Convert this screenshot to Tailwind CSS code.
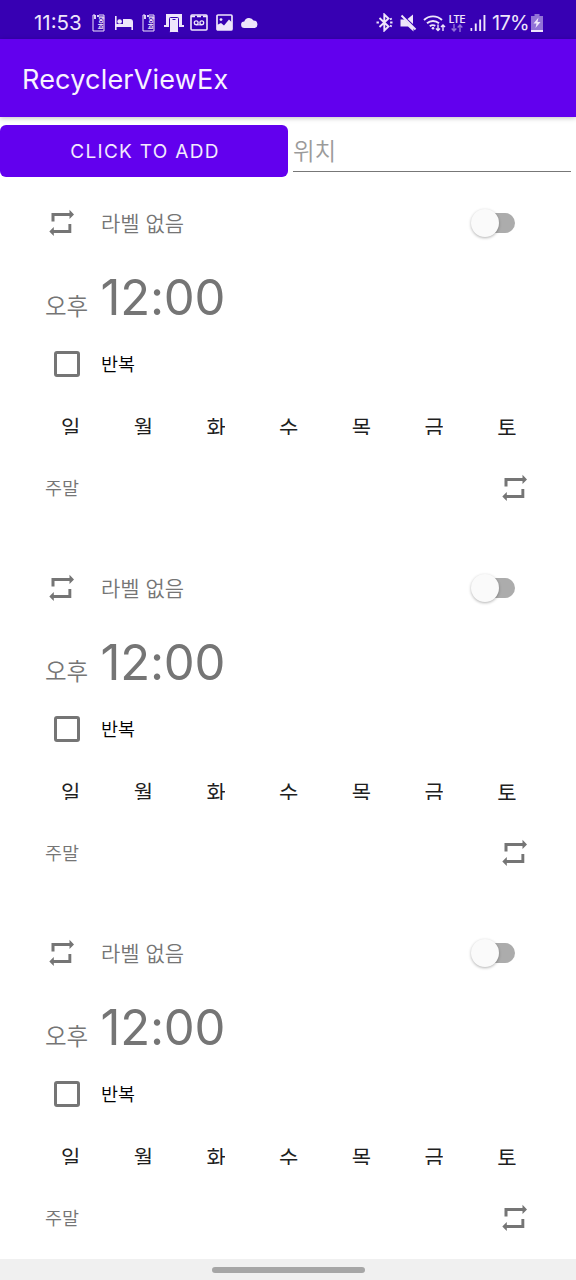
<!DOCTYPE html>
<html lang="ko">
<head>
    <meta charset="UTF-8">
    <meta name="viewport" content="width=device-width, initial-scale=1.0">
    <title>RecyclerViewEx</title>
    <script src="https://cdn.jsdelivr.net/npm/@tailwindcss/browser@4"></script>
</head>
<body class="bg-white font-['Inter','Noto_Sans_CJK_KR',sans-serif] w-[576px] h-[1280px] overflow-hidden flex flex-col">

    <!-- Status bar -->
    <div class="h-[39px] shrink-0 bg-[#3700b3] text-[#eee6fb] flex items-center pt-[6px] pl-[34px] pr-[33px]">
        <span class="text-[20.5px] leading-none w-[58px] mt-[1px] whitespace-nowrap">11:53</span>
        <svg class="w-[13px] h-[18px]" viewBox="0 0 13 18" fill="none" stroke="currentColor">
            <path d="M3 1H1v16h11V1H7" stroke-width="1" />
            <path d="M3 1v4M6 1v2" stroke-width="1.8" />
            <text transform="translate(10.5 15) rotate(-90)" font-size="6" font-weight="700" fill="currentColor" stroke="none">blog</text>
        </svg>
        <svg class="ml-[9px] w-[20px] h-[14px]" viewBox="0 0 20 14" fill="currentColor">
            <path d="M1 0h1.6v8H9V3h7a3 3 0 0 1 3 3v8h-1.6v-3H2.6v3H1z" />
            <circle cx="5.6" cy="5.5" r="2.3" />
        </svg>
        <svg class="ml-[8px] w-[13px] h-[18px]" viewBox="0 0 13 18" fill="none" stroke="currentColor">
            <path d="M3 1H1v16h11V1H7" stroke-width="1" />
            <path d="M3 1v4M6 1v2" stroke-width="1.8" />
            <text transform="translate(10.5 15) rotate(-90)" font-size="6" font-weight="700" fill="currentColor" stroke="none">blog</text>
        </svg>
        <svg class="ml-[9px] w-[20px] h-[20px]" viewBox="0 0 20 20" fill="currentColor">
            <path d="M2 1h16v11h2v2H0v-2h2z" />
            <rect x="5.5" y="4.5" width="9" height="15" rx="1" stroke="#3700b3" stroke-width="1" />
            <path d="M8.5 6.5h3" stroke="#3700b3" stroke-width="1" />
        </svg>
        <svg class="ml-[6px] w-[18px] h-[17px]" viewBox="0 0 18 17" fill="none" stroke="currentColor" stroke-width="1.6">
            <rect x="1" y="1" width="16" height="15" rx="1" />
            <path d="M1 2.4h4M7 2.4h4M13 2.4h4" />
            <circle cx="6.2" cy="8.8" r="1.9" stroke-width="1.3" />
            <circle cx="11.8" cy="8.8" r="1.9" stroke-width="1.3" />
            <path d="M6 10.8h6" stroke-width="1.1" />
        </svg>
        <svg class="ml-[8px] w-[17px] h-[17px]" viewBox="0 0 17 17" fill="currentColor">
            <rect x="1" y="1" width="15" height="15" rx="1" fill="none" stroke="currentColor" stroke-width="1.7" />
            <circle cx="5" cy="5.6" r="1.4" />
            <path d="M1 11l4-2 3 2.5 5-6 3 3V16H1z" />
        </svg>
        <svg class="ml-[7px] w-[19px] h-[12px]" viewBox="0 0 18 12" fill="currentColor">
            <path d="M4 11a3.3 3.3 0 0 1-.2-6.6A5 5 0 0 1 13 3.6a3.8 3.8 0 0 1 1.3 7.4z" />
        </svg>

        <div class="ml-auto flex items-center">
            <svg class="w-[17px] h-[19px]" viewBox="0 0 17 19" fill="none" stroke="currentColor" stroke-width="1.9">
                <path d="M3.5 5l9 8.5-4.200 4V1.500l4.200 4-9 8.500" />
                <path d="M.5 9.500h2.400M14.100 9.500h2.400M14 6.500l1.800-1M14 12.500l1.800 1" />
            </svg>
            <svg class="ml-[7px] w-[17px] h-[18px]" viewBox="0 0 17 18" fill="currentColor">
                <path d="M.5 5.500h4l9 8v4L8 12.500H.5zM7.500 5L13 .5v9.500z" />
                <path d="M1.500 1.500l14 14" stroke="currentColor" stroke-width="1.900" />
            </svg>
            <svg class="ml-[6px] w-[23px] h-[18px]" viewBox="0 0 23 18" fill="none" stroke="currentColor" stroke-width="1.9">
                <path d="M1 6a13 13 0 0 1 18 0M4 9.300a9 9 0 0 1 12 0M6.800 12.300a5 5 0 0 1 5.500-.5" />
                <circle cx="10" cy="14.200" r="1.300" fill="currentColor" stroke="none" />
                <path d="M15 10.500v6M13 14.500l2 2 2-2M20 17v-6M18 13l2-2 2 2" stroke-width="1.400" />
            </svg>
            <div class="ml-[2px] w-[18px] flex flex-col items-center">
                <span class="text-[10px] leading-[10px] font-semibold tracking-[-0.3px]">LTE</span>
                <svg class="w-[12px] h-[8px] opacity-50" viewBox="0 0 12 8" fill="none" stroke="currentColor" stroke-width="1.4">
                    <path d="M3 0v7M.7 4.500L3 7l2.300-2.500M9 8V1M6.700 3.500L9 1l2.300 2.500" />
                </svg>
            </div>
            <svg class="ml-[4px] w-[16px] h-[17px]" viewBox="0 0 16 17" fill="currentColor">
                <path d="M.5 14h1.700v3H.5zM4.800 9.500h1.900V17H4.800zM9.200 5.500h1.900V17H9.200zM13.500 1h1.900v16h-1.900z" />
            </svg>
            <span class="ml-[6px] text-[20px] leading-none w-[39px] whitespace-nowrap tracking-[-0.7px]">17%</span>
            <svg class="w-[12px] h-[18px]" viewBox="0 0 12 18" fill="currentColor">
                <path d="M3.5 0h5v2H12v13H0V2h3.500z" opacity=".5" />
                <path d="M0 15.500h12V18H0zM7.500 3.500L2.500 9.500h3l-1 4.500 5-6h-3z" />
            </svg>
        </div>
    </div>

    <!-- App bar -->
    <header class="h-[78px] shrink-0 bg-[#6200ee] text-[#f8f2ff] flex items-center pl-[22px] pt-[2px] shadow-[0_1px_5px_rgba(0,0,0,0.25)]">
        <h1 class="text-[27px] leading-none tracking-[0.2px]">RecyclerViewEx</h1>
    </header>

    <div class="h-[64px] shrink-0 flex pt-[8px]">
        <button class="w-[288px] h-[52px] rounded-[6px] bg-[#6200ee] text-[#f3eafe] text-[19px] tracking-[1.3px] pt-[2px] pl-[2px]">CLICK TO ADD</button>
        <div class="ml-[5px] w-[278px] h-[47px] border-b border-[#777] text-[#9b9b9b] text-[23.5px] leading-[53px] font-[350]">위치</div>
    </div>

    <main id="alarmList" class="h-[1078px] shrink-0 overflow-hidden">
        <!-- Alarm items are inserted here -->
    </main>

    <!-- Navigation bar -->
    <div class="h-[21px] shrink-0 bg-[#f0f0f0] flex justify-center items-center">
        <div class="w-[153px] h-[6px] rounded-full bg-[#a6a6a6]"></div>
    </div>

    <script>
        const alarms = [
            { label: '라벨 없음', ampm: '오후', time: '12:00', group: '주말' },
            { label: '라벨 없음', ampm: '오후', time: '12:00', group: '주말' },
            { label: '라벨 없음', ampm: '오후', time: '12:00', group: '주말' }
        ];
        const days = ['일', '월', '화', '수', '목', '금', '토'];

        const repeatIcon = `
            <svg class="w-[27px] h-[28px] shrink-0" viewBox="0 0 27 28" fill="#757575">
                <path d="M3.500 12.500V4h18V.8l4.500 4.600-4.500 4.500V6.900h-15v5.600z" />
                <path d="M23.300 15v9H5.800v3L1.300 22.500l4.500-4.500v3.100h14.600V15z" />
            </svg>`;

        const list = document.getElementById('alarmList');
        alarms.forEach(alarm => {
            list.innerHTML += `
            <section class="h-[365px] flex flex-col">
                <div class="h-[84px] flex items-center pl-[48px] pr-[61px] text-[#757575]">
                    ${repeatIcon}
                    <span class="ml-[26px] text-[21px] leading-none font-[350]">${alarm.label}</span>
                    <div class="ml-auto w-[44px] h-[30px] flex items-center">
                        <div class="w-[28px] h-[28px] shrink-0 rounded-full bg-[#fafafa] shadow-[0_1px_3px_rgba(0,0,0,0.3)] z-10"></div>
                        <div class="-ml-[20px] w-[36px] h-[20px] shrink-0 rounded-full bg-[#acacac]"></div>
                    </div>
                </div>
                <div class="h-[64px] flex items-baseline pl-[45px] text-[#757575]">
                    <span class="w-[55.5px] text-[23.5px] font-[350]">${alarm.ampm}</span>
                    <span class="text-[49px] leading-[65px] tracking-[-0.2px]">${alarm.time}</span>
                </div>
                <div class="h-[71px] flex items-center pl-[54px]">
                    <div class="w-[26px] h-[26px] -mt-[1px] rounded-[3px] border-[3px] border-[#757575]"></div>
                    <span class="ml-[21px] text-[18.5px] leading-none font-[350] text-black">반복</span>
                </div>
                <div class="h-[35px] flex pl-[61px] text-[#1f1f1f]">
                    ${days.map(day => `<div class="w-[72.7px]"><div class="w-[19px] h-[35px] overflow-hidden text-[21px] leading-[56px] font-normal">${day}</div></div>`).join('')}
                </div>
                <div class="h-[106px] flex items-center pl-[45px] pr-[48px] text-[#757575]">
                    <span class="text-[18.5px] leading-none font-[350] mt-[1px]">${alarm.group}</span>
                    <div class="ml-auto">${repeatIcon}</div>
                </div>
            </section>`;
        });
    </script>
</body>
</html>
